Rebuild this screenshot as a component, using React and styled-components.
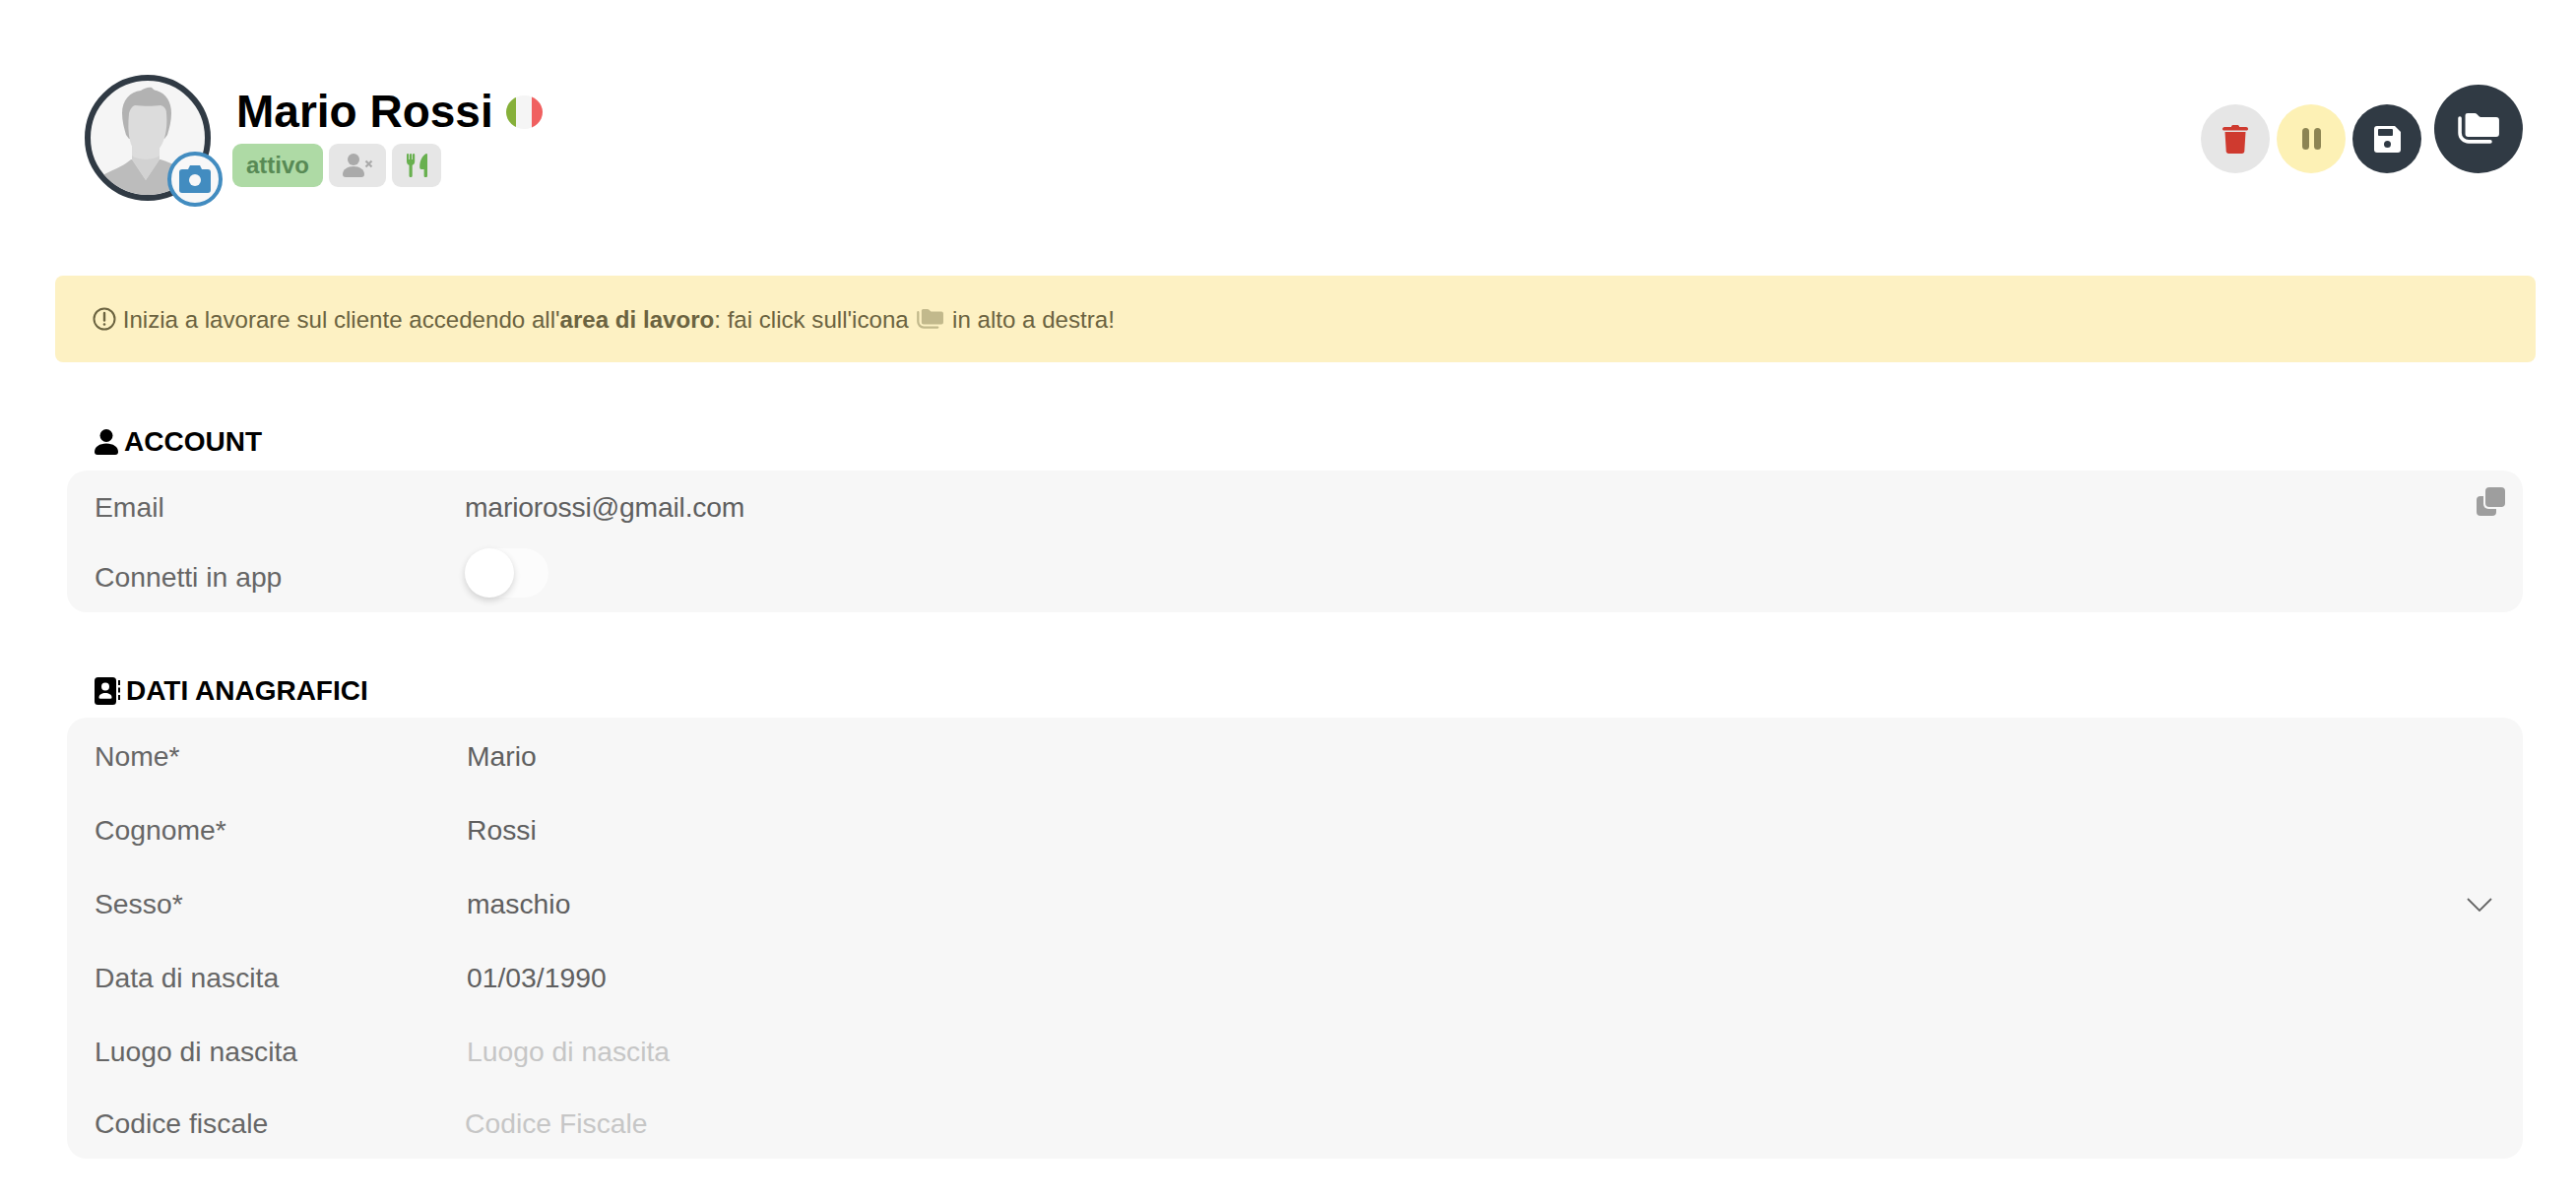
import React from 'react';
import styled, { createGlobalStyle } from 'styled-components';

const GlobalStyle = createGlobalStyle`
  html, body {
    margin: 0;
    padding: 0;
    background: #fff;
    font-family: "Liberation Sans", Arial, sans-serif;
  }
`;

const Page = styled.div`
  padding: 0 41px 41px 56px;
  height: 1218px;
  box-sizing: border-box;
  overflow: hidden;
`;

const Header = styled.header`
  display: flex;
  justify-content: space-between;
  align-items: flex-start;
  margin: 0 13px 76px 30px;
  padding-top: 76px;
`;

const Identity = styled.div`
  display: flex;
  gap: 22px;
`;

const AvatarWrap = styled.div`
  position: relative;
  width: 128px;
  height: 128px;
`;

const AvatarCircle = styled.div`
  width: 128px;
  height: 128px;
  box-sizing: border-box;
  border: 6px solid #303a44;
  border-radius: 50%;
  overflow: hidden;
  background: #f5f5f5;
  svg { display: block; }
`;

const CameraBadge = styled.div`
  position: absolute;
  left: 84px;
  top: 78px;
  width: 56px;
  height: 56px;
  box-sizing: border-box;
  border: 4px solid #428cc0;
  border-radius: 50%;
  background: #f8f8f8;
  display: flex;
  align-items: center;
  justify-content: center;
`;

const NameBlock = styled.div`
  display: flex;
  flex-direction: column;
  padding-top: 10px;
`;

const NameRow = styled.div`
  display: flex;
  align-items: center;
  gap: 13px;
  margin-left: 4px;
  height: 54px;
`;

const Name = styled.h1`
  margin: 0;
  font-size: 46px;
  line-height: 54px;
  font-weight: 700;
  color: #000;
`;

const FlagIcon = styled.svg`
  margin-top: 2px;
`;

const Badges = styled.div`
  display: flex;
  gap: 6px;
  margin-top: 6px;
`;

const Badge = styled.span`
  display: flex;
  align-items: center;
  justify-content: center;
  height: 44px;
  width: ${(p) => p.$w}px;
  border-radius: 9px;
  background: ${(p) => p.$bg || '#e6e6e6'};
  color: #588a55;
  font-size: 24px;
  font-weight: 700;
`;

const Actions = styled.div`
  display: flex;
  align-items: flex-end;
  gap: 7px;
  margin-top: 10px;
`;

const RoundButton = styled.button`
  display: flex;
  align-items: center;
  justify-content: center;
  width: ${(p) => p.$size}px;
  height: ${(p) => p.$size}px;
  margin-left: ${(p) => p.$ml || 0}px;
  padding: 0;
  border: none;
  border-radius: 50%;
  background: ${(p) => p.$bg};
`;

const Alert = styled.div`
  display: flex;
  align-items: center;
  height: 88px;
  padding-left: 38px;
  border-radius: 8px;
  background: #fdf1c3;
  color: #6b6340;
  font-size: 24.1px;
  white-space: pre;
  b { font-weight: 700; }
  svg { flex-shrink: 0; }
`;

const AlertText = styled.span`
  padding-top: 2px;
`;

const AlertFolder = styled.span`
  display: flex;
  margin: 0 2px;
`;

const SectionTitle = styled.h2`
  display: flex;
  align-items: center;
  gap: ${(p) => p.$gap}px;
  height: 40px;
  margin: ${(p) => p.$top}px 0 ${(p) => p.$bottom}px 12px;
  padding-left: ${(p) => p.$pad}px;
  font-size: 28px;
  font-weight: 700;
  color: #000;
`;

const Card = styled.section`
  position: relative;
  margin: 0 13px 0 12px;
  padding-top: ${(p) => p.$pt || 0}px;
  padding-left: 28px;
  border-radius: 20px;
  background: #f7f7f7;
`;

const Row = styled.div`
  display: flex;
  align-items: center;
  height: ${(p) => p.$h}px;
  font-size: 28.3px;
`;

const Label = styled.div`
  width: ${(p) => p.$w || 376}px;
  flex-shrink: 0;
  color: #666;
`;

const Value = styled.div`
  flex: 1;
  color: ${(p) => (p.$empty ? '#c6c6c6' : '#5f5f5f')};
  letter-spacing: ${(p) => p.$spacing || 0}px;
`;

const Toggle = styled.div`
  position: relative;
  width: 85px;
  height: 50px;
  margin-bottom: 10px;
  border-radius: 25px;
  background: #fcfcfc;
`;

const Knob = styled.div`
  position: absolute;
  left: 0;
  top: 0;
  width: 50px;
  height: 50px;
  border-radius: 50%;
  background: #fff;
  box-shadow: 0 3px 7px rgba(0, 0, 0, 0.16);
`;

const CopyButton = styled.div`
  position: absolute;
  top: 17px;
  right: 18px;
  line-height: 0;
`;

const Chevron = styled.div`
  margin-right: 31px;
  line-height: 0;
`;

const DARK = '#303a44';

const FolderStack = ({ size, color }) => (
  <svg width={size} height={size * 0.76} viewBox="0 0 42 32" fill={color}>
    <path d="M7.500 2.500A2.500 2.500 0 0 1 10 0h7c1 0 1.800.4 2.400 1l2.200 2.200c.5.500 1.100.8 1.900.8H39a3 3 0 0 1 3 3v14a3 3 0 0 1-3 3H10.500a3 3 0 0 1-3-3z" />
    <path d="M2 5v15a9 9 0 0 0 9 9h22" fill="none" stroke={color} strokeWidth="3.600" strokeLinecap="round" />
  </svg>
);

const UserIcon = () => (
  <svg width="24" height="26" viewBox="0 0 24 26" fill="#000">
    <circle cx="12" cy="6.500" r="6.500" />
    <path d="M0 23c0-5 5-8.500 12-8.500S24 18 24 23c0 2-1 3-3 3H3c-2 0-3-1-3-3z" />
  </svg>
);

const ContactIcon = () => (
  <svg width="28" height="28" viewBox="0 0 28 28">
    <rect x="1" width="22" height="28" rx="3.500" fill="#000" />
    <circle cx="12" cy="9.500" r="4" fill="#fff" />
    <path d="M5.500 20.500c0-3 3-4.500 6.500-4.500s6.500 1.500 6.500 4.500c0 .8-.5 1.200-1.200 1.200H6.700c-.7 0-1.200-.4-1.200-1.200z" fill="#fff" />
    <path d="M25 3h2v5h-2zM25 10.500h2v5h-2zM25 18h2v5h-2z" fill="#000" />
  </svg>
);

const WarnIcon = () => (
  <svg width="24" height="24" viewBox="0 0 24 24" fill="none" stroke="#6b6340" strokeWidth="2">
    <circle cx="12" cy="12" r="10.500" />
    <path d="M12 6v7.500" strokeLinecap="round" strokeWidth="2.400" />
    <circle cx="12" cy="17.500" r="1.300" fill="#6b6340" stroke="none" />
  </svg>
);

const Avatar = () => (
  <svg width="116" height="116" viewBox="0 0 116 116">
    <path d="M10 97c11-6 22-9 31-17h30c7 2 14 5 22 10v26H10z" fill="#bcbcbc" />
    <path d="M42 58h28v22l-14 21-14-21z" fill="#dcdcdc" />
    <path d="M42 76c6 5 22 5 28 0v4l-14 21-14-21z" fill="#d2d2d2" />
    <path d="M32 33c0-13 8-22 19-23 3-2 8-4 11-3 2 2 3 3 5 3 10 3 15 12 15 23 0 8-2 15-4 22l-3 4H39l-3-4c-2-7-4-14-4-22z" fill="#b2b2b2" />
    <path d="M39 33c1-4 3-7 6-8 8 1 19 1 26 0 4 1 6 4 6 8 1 10 0 20-3 28-3 9-11 15-18 15s-14-6-16-15c-2-8-2-18-1-28z" fill="#dcdcdc" />
  </svg>
);

export default function App() {
  return (
    <Page>
      <GlobalStyle />
      <Header>
        <Identity>
          <AvatarWrap>
            <AvatarCircle>
              <Avatar />
            </AvatarCircle>
            <CameraBadge>
              <svg width="32" height="28" viewBox="0 0 32 28">
                <path d="M3 4h6l2-4h10l2 4h6a3 3 0 0 1 3 3v18a3 3 0 0 1-3 3H3a3 3 0 0 1-3-3V7a3 3 0 0 1 3-3z" fill="#428cc0" />
                <circle cx="16" cy="15" r="6" fill="#f8f8f8" />
              </svg>
            </CameraBadge>
          </AvatarWrap>
          <NameBlock>
            <NameRow>
              <Name>Mario Rossi</Name>
              <FlagIcon width="37" height="34" viewBox="0 0 37 34">
                <defs>
                  <clipPath id="flag">
                    <ellipse cx="18.500" cy="17" rx="18.500" ry="17" />
                  </clipPath>
                </defs>
                <g clipPath="url(#flag)">
                  <rect width="10" height="34" fill="#86b03a" />
                  <rect x="10" width="17" height="34" fill="#f5f5f5" />
                  <rect x="26" width="11" height="34" fill="#f06060" />
                </g>
              </FlagIcon>
            </NameRow>
            <Badges>
              <Badge $w={92} $bg="#aedaa5">attivo</Badge>
              <Badge $w={58}>
                <svg width="31" height="24" viewBox="0 0 31 24" fill="#aaa">
                  <circle cx="11" cy="6" r="6" />
                  <path d="M0 21c0-5 5-8 11-8s11 3 11 8c0 2-1 3-3 3H3c-2 0-3-1-3-3z" />
                  <path d="M23.500 7.500l6 6M29.500 7.500l-6 6" stroke="#aaa" strokeWidth="2.200" />
                </svg>
              </Badge>
              <Badge $w={50}>
                <svg width="21" height="24" viewBox="0 0 21 24" fill="#68b04f">
                  <path d="M0 1.200a1 1 0 0 1 2.200 0V6H3V1.200a1 1 0 0 1 2.200 0V6H6V1.200a1 1 0 0 1 2.200 0V8c0 2-1 3.200-2.500 3.800V22.500a1.600 1.600 0 0 1-3.200 0V11.800C1 11.200 0 10 0 8z" />
                  <path d="M21 1v21.500a1.700 1.700 0 0 1-3.400 0V16H15c-1.500 0-1.800-1-1.800-2.500C13.200 7 16 2 19.500.2 20.300-.2 21 .2 21 1z" />
                </svg>
              </Badge>
            </Badges>
          </NameBlock>
        </Identity>
        <Actions>
          <RoundButton $size={70} $bg="#e6e6e6" aria-label="elimina">
            <svg width="26" height="29" viewBox="0 0 26 29" fill="#cf3a2f">
              <path d="M9 1.500c0-.8 1-1.500 2-1.500h4c1 0 2 .7 2 1.500V2h7c1.200 0 2 .8 2 2s-.8 1.500-2 1.500H2C.8 5.500 0 5 0 4s.8-2 2-2h7z" />
              <path d="M2.500 7h21l-1.200 19.500c-.1 1.500-1 2.500-2.500 2.500H6.200c-1.500 0-2.400-1-2.500-2.500z" />
            </svg>
          </RoundButton>
          <RoundButton $size={70} $bg="#fdf1b5" aria-label="sospendi">
            <svg width="19" height="22" viewBox="0 0 19 22" fill="#8c8453">
              <rect width="7" height="22" rx="3.500" />
              <rect x="12" width="7" height="22" rx="3.500" />
            </svg>
          </RoundButton>
          <RoundButton $size={70} $bg={DARK} aria-label="salva">
            <svg width="27" height="27" viewBox="0 0 27 27">
              <path d="M3 0h18l6 6v18a3 3 0 0 1-3 3H3a3 3 0 0 1-3-3V3a3 3 0 0 1 3-3z" fill="#fff" />
              <rect x="4" y="3" width="15" height="7" rx="1" fill={DARK} />
              <circle cx="13.500" cy="18.500" r="3.500" fill={DARK} />
            </svg>
          </RoundButton>
          <RoundButton $size={90} $ml={6} $bg={DARK} aria-label="area di lavoro">
            <FolderStack size={42} color="#fff" />
          </RoundButton>
        </Actions>
      </Header>

      <Alert>
        <WarnIcon />
        <AlertText>{' Inizia a lavorare sul cliente accedendo all\''}<b>area di lavoro</b>{': fai click sull\'icona '}</AlertText>
        <AlertFolder>
          <FolderStack size={27} color="#c2b98c" />
        </AlertFolder>
        <AlertText>{' in alto a destra!'}</AlertText>
      </Alert>

      <SectionTitle $top={61} $bottom={9} $pad={28} $gap={6}>
        <UserIcon />
        ACCOUNT
      </SectionTitle>
      <Card $pt={1}>
        <Row $h={72}>
          <Label>Email</Label>
          <Value $spacing={-0.2}>mariorossi@gmail.com</Value>
        </Row>
        <Row $h={71}>
          <Label>Connetti in app</Label>
          <Toggle>
            <Knob />
          </Toggle>
        </Row>
        <CopyButton>
          <svg width="29" height="29" viewBox="0 0 29 29">
            <rect y="9" width="20" height="20" rx="4" fill="#9e9e9e" />
            <rect x="7" y="-1" width="23" height="23" rx="5" fill="#f7f7f7" />
            <rect x="9" width="20" height="20" rx="4" fill="#9e9e9e" />
          </svg>
        </CopyButton>
      </Card>

      <SectionTitle $top={60} $bottom={7} $pad={27} $gap={5}>
        <ContactIcon />
        DATI ANAGRAFICI
      </SectionTitle>
      <Card $pt={2}>
        <Row $h={75}>
          <Label $w={378}>Nome*</Label>
          <Value>Mario</Value>
        </Row>
        <Row $h={75}>
          <Label $w={378}>Cognome*</Label>
          <Value>Rossi</Value>
        </Row>
        <Row $h={75}>
          <Label $w={378}>Sesso*</Label>
          <Value>maschio</Value>
          <Chevron>
            <svg width="26" height="14" viewBox="0 0 26 14" fill="none" stroke="#666" strokeWidth="1.800">
              <path d="M1 1l12 12L25 1" />
            </svg>
          </Chevron>
        </Row>
        <Row $h={75}>
          <Label $w={378}>Data di nascita</Label>
          <Value>01/03/1990</Value>
        </Row>
        <Row $h={75}>
          <Label $w={378}>Luogo di nascita</Label>
          <Value $empty>Luogo di nascita</Value>
        </Row>
        <Row $h={71}>
          <Label>Codice fiscale</Label>
          <Value $empty>Codice Fiscale</Value>
        </Row>
      </Card>
    </Page>
  );
}
